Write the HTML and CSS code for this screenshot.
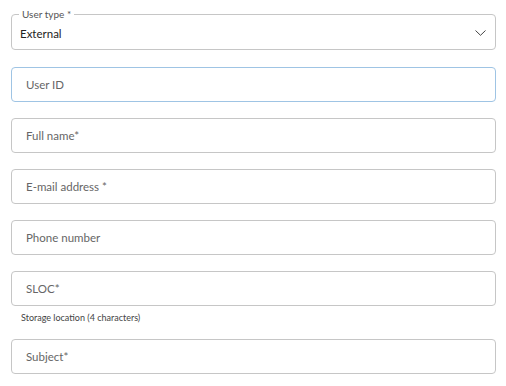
FILE: index.html
```html
<!DOCTYPE html>
<html lang="en">
<head>
  <meta charset="UTF-8" />
  <title>Request access</title>
  <link rel="stylesheet" href="styles.css">
</head>
<body>
  <form class="request-form">
    <div class="field select-field">
      <span class="floating-label">User type *</span>
      <span class="value">External</span>
      <svg class="chevron" width="11" height="6" viewBox="0 0 11 6">
        <path d="M0.5 0.5 L5.5 5.3 L10.5 0.5" fill="none" stroke="#444" stroke-width="1" />
      </svg>
    </div>
    <div class="field focused"><span class="placeholder">User ID</span></div>
    <div class="field"><span class="placeholder">Full name*</span></div>
    <div class="field"><span class="placeholder">E-mail address *</span></div>
    <div class="field"><span class="placeholder">Phone number</span></div>
    <div class="group">
      <div class="field"><span class="placeholder">SLOC*</span></div>
      <div class="hint">Storage location (4 characters)</div>
    </div>
    <div class="field"><span class="placeholder">Subject*</span></div>
  </form>
</body>
</html>
```

FILE: styles.css
```css
body {
  margin: 0;
  font-family: Lato, 'Open Sans', sans-serif;
  background: #fff;
  color: #222;
}

.request-form {
  display: flex;
  flex-direction: column;
  gap: 16px;
  padding: 14px 10px 0 11px;
}

.field {
  position: relative;
  display: flex;
  align-items: center;
  height: 35px;
  box-sizing: border-box;
  padding: 0 14px;
  border: 1px solid #c6c6c6;
  border-radius: 4px;
  font-size: 11.5px;
}

.field.focused {
  border-color: #9fc4e4;
}

.select-field {
  height: 36px;
  margin-bottom: 1px;
  padding: 2px 9px 0 8px;
  justify-content: space-between;
}

.floating-label {
  position: absolute;
  top: -7px;
  left: 7px;
  padding: 0 3px;
  background: #fff;
  font-size: 10px;
  line-height: 12px;
  color: #555;
}

.value {
  color: #222;
}

.placeholder {
  color: #666;
}

.group {
  display: flex;
  flex-direction: column;
  gap: 6px;
}

.hint {
  padding-left: 10px;
  font-size: 9px;
  line-height: 11px;
  color: #444;
}
```
